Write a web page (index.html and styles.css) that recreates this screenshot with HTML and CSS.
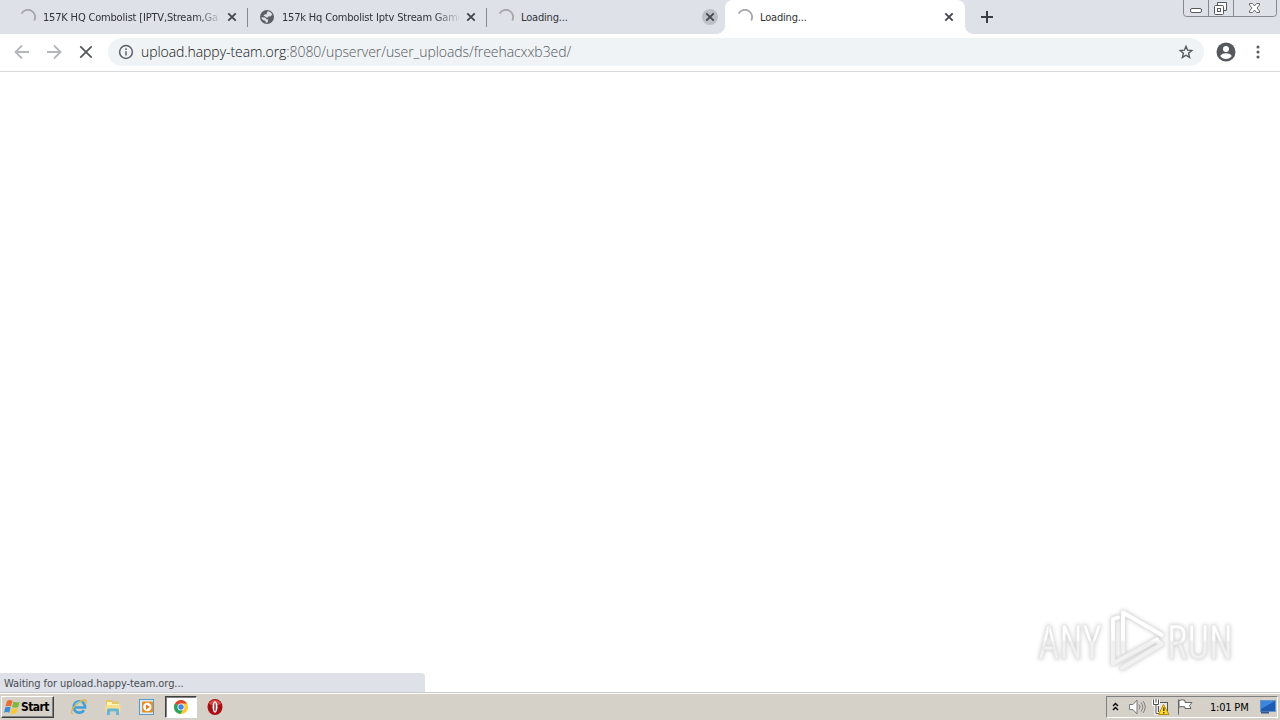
FILE: index.html
```html
<!DOCTYPE html>
<html lang="en">
<head>
  <meta charset="UTF-8" />
  <meta name="viewport" content="width=device-width, initial-scale=1" />
  <title>Loading...</title>
  <link rel="stylesheet" href="styles.css">
</head>
<body>
  <div class="tabs">
    <div class="tab">
      <svg class="tab-icon" viewBox="0 0 16 16"><path class="spinner" d="M1.6 4.6A7 7 0 0 1 14.2 11.5" /></svg>
      <span class="tab-title fade">157K HQ Combolist [IPTV,Stream,Ga</span>
      <svg class="close" viewBox="0 0 16 16"><path d="M4.3 4.3l7.4 7.4M11.7 4.3l-7.4 7.4" /></svg>
    </div>
    <div class="tab">
      <svg class="tab-icon" viewBox="0 0 16 16">
        <circle cx="8" cy="8" r="7" fill="#5b5f65" />
        <path d="M8.5 2.2c2.3.2 4 1.4 4.8 3.4l-2 1.9-1.8-.3-.5 1.3-2 .1-.9-1.4-1.7-.2 1-1.4 2-.4zM2.4 8.3l3.7.2 1.4 1.7 1.8.2-.7 3-1.7.3-.6-2-1.8-.4c-1.2-.7-1.9-1.7-2.1-3z" fill="#dee1e8" />
      </svg>
      <span class="tab-title fade">157k Hq Combolist Iptv Stream Game</span>
      <svg class="close" viewBox="0 0 16 16"><path d="M4.3 4.3l7.4 7.4M11.7 4.3l-7.4 7.4" /></svg>
    </div>
    <div class="tab last">
      <svg class="tab-icon" viewBox="0 0 16 16"><path class="spinner" d="M1.6 4.6A7 7 0 0 1 14.2 11.5" /></svg>
      <span class="tab-title">Loading...</span>
      <svg class="close hover" viewBox="0 0 16 16"><path d="M4.3 4.3l7.4 7.4M11.7 4.3l-7.4 7.4" /></svg>
    </div>
    <div class="tab active">
      <svg class="tab-icon" viewBox="0 0 16 16"><path class="spinner" d="M1.6 4.6A7 7 0 0 1 14.2 11.5" /></svg>
      <span class="tab-title">Loading...</span>
      <svg class="close" viewBox="0 0 16 16"><path d="M4.3 4.3l7.4 7.4M11.7 4.3l-7.4 7.4" /></svg>
    </div>
    <svg class="new-tab" viewBox="0 0 14 14"><path d="M7 1v12M1 7h12" /></svg>
    <div class="win-buttons">
      <svg width="94" height="17" viewBox="0 0 94 17" fill="none">
        <path d="M.5 0v13.5q0 3 3 3h87q3 0 3-3V0M25.5 0v16M50.5 0v16" stroke="#85888f" />
        <rect x="7.5" y="8.5" width="11" height="4" rx="1.5" fill="#fff" stroke="#55585f" />
        <path d="M34.5 5V2.500h9v8h-2.500" fill="#fff" stroke="#55585f" />
        <rect x="31.5" y="5.500" width="9" height="9" rx="1" fill="#fff" stroke="#55585f" />
        <rect x="34.5" y="8.500" width="3" height="3" stroke="#55585f" />
        <path d="M66.500 3.500h3l2 2.500 2-2.500h3v1.500l-2.500 3 2.500 3v1.500h-3l-2-2.500-2 2.500h-3v-1.500l2.500-3-2.500-3z" fill="#fff" stroke="#6a6d74" />
      </svg>
    </div>
  </div>

  <div class="toolbar">
    <svg class="nav" viewBox="0 0 16 16"><path d="M15 8H2M8 1.500L1.500 8 8 14.500" stroke="#b4b6b9" /></svg>
    <svg class="nav" viewBox="0 0 16 16"><path d="M1 8h13M8 1.500L14.500 8 8 14.500" stroke="#b4b6b9" /></svg>
    <svg class="nav" viewBox="0 0 16 16"><path d="M2.300 2.300l11.400 11.400M13.700 2.300L2.300 13.700" stroke="#55585c" /></svg>
    <div class="omnibox">
      <svg class="info" viewBox="0 0 16 16">
        <circle cx="8" cy="8" r="6.400" />
        <path d="M8 7.300v4.200M8 4.300v1.600" />
      </svg>
      <div class="url"><span class="host">upload.happy-team.org</span><span class="path">:8080/upserver/user_uploads/freehacxxb3ed/</span></div>
      <svg class="star" viewBox="0 0 16 16"><path d="M8 2.300l1.600 3.900 4.200.3-3.200 2.800 1 4.100L8 11.200l-3.600 2.200 1-4.100-3.200-2.800 4.200-.3z" /></svg>
    </div>
    <svg class="avatar" viewBox="0 0 20 20">
      <circle cx="10" cy="10" r="9.500" fill="#55585d" />
      <circle cx="10" cy="7" r="3" fill="#fff" />
      <path d="M4.200 14c1.200-2 3.700-2.700 5.800-2.700s4.600.7 5.800 2.700A7 7 0 0 1 10 17a7 7 0 0 1-5.800-3z" fill="#fff" />
    </svg>
    <svg class="menu" viewBox="0 0 4 14"><circle cx="2" cy="2" r="1.500" /><circle cx="2" cy="7" r="1.500" /><circle cx="2" cy="12" r="1.500" /></svg>
  </div>

  <div class="page">
    <div class="status">Waiting for upload.happy-team.org...</div>
    <div class="watermark">
      <svg width="220" height="80" viewBox="0 0 220 80">
        <defs>
          <linearGradient id="fade" x1="0" y1="0" x2="0" y2="80" gradientUnits="userSpaceOnUse">
            <stop offset=".5" stop-color="#fff" />
            <stop offset=".52" stop-color="#f1f1f1" />
          </linearGradient>
        </defs>
        <g class="mark">
          <text x="13" y="59" textLength="64" lengthAdjust="spacingAndGlyphs">ANY</text>
          <text x="142" y="59" textLength="66" lengthAdjust="spacingAndGlyphs">RUN</text>
          <g class="edge">
            <path d="M93 17.500l-5 1.500v44.500l44-24" />
            <path d="M98 52V12.500l39 22.500" />
            <path d="M97 68l40-24-5-3" />
          </g>
          <g class="core">
            <path d="M93 17.500l-5 1.500v44.500l44-24" />
            <path d="M98 52V12.500l39 22.500" />
            <path d="M97 68l40-24-5-3" />
          </g>
        </g>
      </svg>
    </div>
  </div>

  <div class="taskbar">
    <div class="start">
      <svg width="17" height="16" viewBox="0 0 17 16">
        <path d="M3 2c2-1.300 4-1.200 5.500 0L7 7.500c-1.600-1.100-3.600-1-5.500 0z" fill="#ed6a32" />
        <path d="M9.500 2.500c2 1 4 1 6.200-.1L14.300 8c-2.200 1-4.200 1-6.200 0z" fill="#7fb93c" />
        <path d="M1.200 8.500c1.900-1 3.900-1.100 5.500 0l-1.500 5.300c-1.600-1-3.500-1.100-5.200 0z" fill="#3d8bd3" />
        <path d="M7.800 9c2 1 4 1 6.200 0l-1.500 5.200c-2.100 1.100-4.200 1-6.200 0z" fill="#f8c837" />
      </svg>
      <span>Start</span>
    </div>
    <div class="quick">
      <!-- Internet Explorer -->
      <svg width="18" height="18" viewBox="0 0 18 18" fill="none">
        <path d="M14 12.200A5.700 5.700 0 1 1 15 9.500H5" stroke="#3fa0d9" stroke-width="2.600" />
        <path d="M2.500 16C-1 14 6 4 14 2c3-.500 2.500 2 1 4" stroke="#dfb545" stroke-width="1.300" />
        <path d="M5 6.500a5 5 0 0 1 7-1.500" stroke="#8bd2f2" />
      </svg>
      <!-- Explorer -->
      <svg width="18" height="18" viewBox="0 0 18 18">
        <path d="M2 2h6l1 1.500h6V14H2z" fill="#e6c765" />
        <path d="M3 4h5v2h7v3H3z" fill="#fff3b5" />
        <path d="M1.500 7h15v7h-15z" fill="#f5df8e" />
        <path d="M3 17v-5q0-1.500 1.500-1.500h9q1.500 0 1.500 1.500v5h-3v-3.500H6V17z" fill="#67b5d8" />
      </svg>
      <!-- Media player -->
      <svg width="18" height="18" viewBox="0 0 18 18">
        <rect x="1.500" y="1.500" width="14" height="15" fill="#d8ebf8" stroke="#5b9ac6" />
        <rect x="4" y="3.500" width="11" height="11" rx="1" fill="#f08b1d" />
        <circle cx="9.300" cy="9" r="4.200" fill="#fff" />
        <path d="M8 6.500l4 2.500-4 2.500z" fill="#e87913" />
      </svg>
      <div class="pressed">
        <svg width="16" height="16" viewBox="0 0 16 16">
          <circle cx="8" cy="8" r="7" fill="#fbc92f" />
          <path d="M8 8L2 4.400A7 7 0 0 1 14.100 4.600H8z" fill="#dc4637" />
          <path d="M8 8L2 4.400A7 7 0 0 0 7.300 15L10.500 10z" fill="#28a25c" />
          <circle cx="8" cy="8" r="3.500" fill="#fff" />
          <circle cx="8" cy="8" r="2.700" fill="#4384e8" />
        </svg>
      </div>
      <!-- Opera -->
      <svg width="18" height="18" viewBox="0 0 18 18">
        <ellipse cx="9" cy="9" rx="7.500" ry="8" fill="#a80e13" />
        <path d="M3 6a6.500 6.500 0 0 1 12 0 14 14 0 0 1-12 0z" fill="#d64a49" />
        <ellipse cx="9" cy="9" rx="2.500" ry="5.700" fill="#fff" />
        <ellipse cx="9" cy="9" rx=".700" ry="4.500" fill="#921014" />
      </svg>
    </div>
    <div class="tray">
      <svg class="chevrons" viewBox="0 0 7 9"><path d="M1 4l2.500-2.500L6 4M1 8l2.500-2.500L6 8" /></svg>
      <svg class="sound" viewBox="0 0 18 18" fill="none">
        <path d="M1.500 6.500H5l4-4.500v14l-4-4.500H1.500z" fill="#fff" stroke="#77787a" />
        <path d="M11 6.500q2 2.500 0 5M13 4.500q3.500 4.500 0 9M15 3q4.500 6 0 12" stroke="#808184" />
      </svg>
      <svg class="network" viewBox="0 0 18 18" fill="none">
        <rect x="6.500" y="4.500" width="9" height="10" fill="#e8e8e4" stroke="#55565a" />
        <path d="M1.500 1.500v5h5v-5M4 1v3M4 7v8.500h4" stroke="#fff" stroke-width="3" />
        <path d="M1.500 1.500v5h5v-5M4 1v3M4 7v8.500h4" stroke="#4d4f53" />
        <path d="M11.500 6.500L17 16.500H6.500z" fill="#ffdb27" stroke="#b98c10" />
        <path d="M11.800 9.500v3.500M11.800 14v1.500" stroke="#39310d" stroke-width="1.300" />
      </svg>
      <svg class="flag" viewBox="0 0 18 18">
        <path d="M2.500 1.500v15M3 2.500q4-1.500 6 0v2h7l-2.500 3 1.500 3H9V9Q6 8 3 9z" fill="#fff" stroke="#626367" />
      </svg>
      <span class="clock">1:01 PM</span>
      <svg class="desktop" viewBox="0 0 16 14">
        <rect x=".5" y=".5" width="15" height="11" fill="#1d5bb5" stroke="#6c94c4" />
        <path d="M1 1h14L1 9z" fill="#3c87dc" />
        <path d="M1 12.500h8" stroke="#38588a" stroke-width="2" />
      </svg>
    </div>
  </div>
</body>
</html>
```
FILE: styles.css
```css
* {
  box-sizing: border-box;
}
body {
  margin: 0;
  width: 1280px;
  height: 720px;
  overflow: hidden;
  display: flex;
  flex-direction: column;
  background: #fff;
  font-family: 'DejaVu Sans Condensed', 'DejaVu Sans', sans-serif;
  font-stretch: condensed;
  font-size: 11px;
  color: #303238;
}
svg {
  display: block;
  flex: none;
}
.tabs {
  height: 34px;
  background: #dee1e8;
  display: flex;
  padding-left: 9px;
  position: relative;
}
.tab {
  width: 239px;
  height: 34px;
  display: flex;
  align-items: center;
  padding: 0 8px 0 11px;
  position: relative;
}
.tab::after {
  content: '';
  position: absolute;
  right: 0;
  top: 8px;
  width: 1px;
  height: 19px;
  background: #85888e;
}
.tab.last::after {
  display: none;
}
.tab.active {
  width: 240px;
  margin-left: -1px;
  padding-left: 12px;
  background: #fff;
  border-radius: 8px 8px 0 0;
}
.tab.active::before,
.tab.active::after {
  content: '';
  position: absolute;
  top: auto;
  bottom: 0;
  width: 8px;
  height: 8px;
}
.tab.active::before {
  left: -8px;
  background: radial-gradient(circle at 0 0, #dee1e8 7.5px, #fff 8px);
}
.tab.active::after {
  right: -8px;
  background: radial-gradient(circle at 100% 0, #dee1e8 7.5px, #fff 8px);
}
.tab-icon {
  width: 16px;
  height: 16px;
}
.spinner {
  fill: none;
  stroke: #a5a7ab;
  stroke-width: 1.8;
}
.tab-title {
  width: 177px;
  padding-top: 1px;
  margin-left: 7px;
  white-space: nowrap;
  line-height: 16px;
  letter-spacing: -0.18px;
}
.tab-title.fade {
  mask-image: linear-gradient(to right, #000 152px, transparent 180px);
}
.close {
  width: 16px;
  height: 16px;
  margin-left: 4px;
  stroke: #44474d;
  stroke-width: 1.9;
  border-radius: 50%;
}
.close.hover {
  background: #bdc0c7;
}
.new-tab {
  width: 14px;
  height: 14px;
  margin: 10px 0 0 15px;
  stroke: #3b3e45;
  stroke-width: 2;
}
.win-buttons {
  position: absolute;
  right: 3px;
  top: 0;
}
.toolbar {
  height: 38px;
  display: flex;
  align-items: center;
  padding: 0 19px 1px 14px;
  border-bottom: 1px solid #d8d9da;
}
.nav {
  width: 16px;
  height: 16px;
  margin-right: 16px;
  fill: none;
  stroke-width: 1.8;
}
.omnibox {
  width: 1096px;
  height: 28px;
  margin-left: -2px;
  border-radius: 14px;
  background: #f0f3f5;
  display: flex;
  align-items: center;
  padding: 0 10px;
}
.info {
  width: 16px;
  height: 16px;
  fill: none;
  stroke: #5d6065;
  stroke-width: 1.5;
}
.url {
  flex: 1;
  margin-left: 7px;
  font-family: 'Open Sans', 'Noto Sans', sans-serif;
  font-stretch: normal;
  font-size: 14px;
  font-weight: 300;
  line-height: 20px;
  letter-spacing: -0.07px;
  white-space: nowrap;
}
.host {
  color: #111316;
}
.path {
  color: #55595e;
}
.star {
  width: 16px;
  height: 16px;
  fill: none;
  stroke: #55585d;
  stroke-width: 1.4;
}
.avatar {
  width: 20px;
  height: 20px;
  margin-left: 12px;
}
.menu {
  width: 4px;
  height: 14px;
  margin-left: 20px;
  fill: #55585d;
}
.page {
  flex: 1;
  position: relative;
}
.status {
  position: absolute;
  left: 0;
  bottom: 0;
  width: 425px;
  height: 19px;
  padding-left: 4px;
  line-height: 21px;
  letter-spacing: -0.08px;
  background: #dee1e8;
  border-radius: 0 4px 0 0;
  color: #4a4c51;
}
.watermark {
  position: absolute;
  right: 35px;
  bottom: 12px;
}
.mark {
  fill: url(#fade);
  stroke: #e3e3e3;
  stroke-width: 0.7;
  filter: drop-shadow(0 0 2px rgba(0, 0, 0, 0.22));
  font-family: Roboto, 'Liberation Sans', sans-serif;
  font-size: 48px;
}
.edge,
.core {
  fill: none;
  stroke-linejoin: round;
  stroke-linecap: round;
}
.edge {
  stroke: #e3e3e3;
  stroke-width: 5;
}
.core {
  stroke: url(#fade);
  stroke-width: 3.8;
}
.taskbar {
  height: 28px;
  display: flex;
  align-items: center;
  padding: 2px 2px 0 1px;
  background: linear-gradient(#c9cac5 1px, #fff 1px, #fff 2px, #d5d0c8 2px);
}
.start {
  width: 53px;
  height: 22px;
  display: flex;
  align-items: center;
  padding-left: 2px;
  border: 1px solid;
  border-color: #fff #404040 #404040 #fff;
  box-shadow: inset -1px -1px #808080;
  color: #000;
  font-size: 12px;
  font-weight: bold;
  letter-spacing: -0.55px;
}
.quick {
  display: flex;
  align-items: center;
  margin-left: 16px;
  gap: 16px;
}
.pressed {
  width: 32px;
  height: 22px;
  margin: 0 -7px;
  display: flex;
  align-items: center;
  justify-content: center;
  background: #fff;
  border: 1px solid;
  border-color: #404040 #fff #fff #404040;
  box-shadow: inset 1px 1px #808080;
}
.tray {
  width: 172px;
  height: 22px;
  margin-left: auto;
  display: flex;
  align-items: center;
  padding-left: 5px;
  border: 1px solid;
  border-color: #808080 #fff #fff #808080;
  color: #000;
}
.chevrons {
  width: 7px;
  height: 9px;
  margin-bottom: 2px;
  fill: none;
  stroke: #000;
  stroke-width: 1.4;
}
.sound,
.network,
.flag {
  width: 18px;
  height: 18px;
}
.sound {
  margin-left: 9px;
}
.network {
  margin-left: 6px;
}
.flag {
  margin-left: 6px;
}
.clock {
  width: 42px;
  margin-left: 16px;
  white-space: nowrap;
  letter-spacing: -0.2px;
}
.desktop {
  width: 16px;
  height: 14px;
  margin-left: 8px;
}
```
